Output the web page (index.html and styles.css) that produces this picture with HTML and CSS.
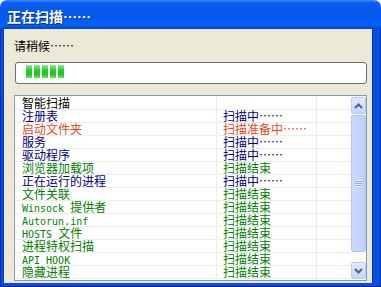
FILE: index.html
```html
<!DOCTYPE html>
<html lang="zh-CN">
<head>
    <meta charset="UTF-8">
    <meta name="viewport" content="width=device-width, initial-scale=1.0">
    <title>正在扫描……</title>
    <link rel="stylesheet" href="styles.css">
</head>
<body>
    <div class="window">
        <div class="titlebar">
            <span class="title">正在扫描……</span>
        </div>
        <div class="frame">
            <div class="content">
                <p class="wait">请稍候……</p>
                <div class="progress">
                    <span class="block"></span>
                    <span class="block"></span>
                    <span class="block"></span>
                    <span class="block"></span>
                    <span class="block"></span>
                </div>
                <div class="list">
                    <div class="rows">
                        <div class="row black"><span class="name">智能扫描</span><span class="state"></span><span class="extra"></span></div>
                        <div class="row navy"><span class="name">注册表</span><span class="state">扫描中……</span><span class="extra"></span></div>
                        <div class="row orange"><span class="name">启动文件夹</span><span class="state">扫描准备中……</span><span class="extra"></span></div>
                        <div class="row navy"><span class="name">服务</span><span class="state">扫描中……</span><span class="extra"></span></div>
                        <div class="row navy"><span class="name">驱动程序</span><span class="state">扫描中……</span><span class="extra"></span></div>
                        <div class="row green"><span class="name">浏览器加载项</span><span class="state">扫描结束</span><span class="extra"></span></div>
                        <div class="row navy"><span class="name">正在运行的进程</span><span class="state">扫描中……</span><span class="extra"></span></div>
                        <div class="row green"><span class="name">文件关联</span><span class="state">扫描结束</span><span class="extra"></span></div>
                        <div class="row green"><span class="name"><span class="latin">Winsock </span>提供者</span><span class="state">扫描结束</span><span class="extra"></span></div>
                        <div class="row green"><span class="name"><span class="latin">Autorun.inf</span></span><span class="state">扫描结束</span><span class="extra"></span></div>
                        <div class="row green"><span class="name"><span class="latin">HOSTS </span>文件</span><span class="state">扫描结束</span><span class="extra"></span></div>
                        <div class="row green"><span class="name">进程特权扫描</span><span class="state">扫描结束</span><span class="extra"></span></div>
                        <div class="row green"><span class="name"><span class="latin">API HOOK</span></span><span class="state">扫描结束</span><span class="extra"></span></div>
                        <div class="row green"><span class="name">隐藏进程</span><span class="state">扫描结束</span><span class="extra"></span></div>
                    </div>
                    <div class="scrollbar">
                        <div class="sb-btn">
                            <svg width="9" height="6" viewBox="0 0 9 6"><path d="M1 5 L4.5 1.5 L8 5" fill="none" stroke="#4d6185" stroke-width="2"/></svg>
                        </div>
                        <div class="sb-thumb">
                            <span class="grip"></span>
                        </div>
                        <div class="sb-track"></div>
                        <div class="sb-btn">
                            <svg width="9" height="6" viewBox="0 0 9 6"><path d="M1 1 L4.5 4.5 L8 1" fill="none" stroke="#4d6185" stroke-width="2"/></svg>
                        </div>
                    </div>
                </div>
            </div>
        </div>
    </div>
</body>
</html>
```

FILE: styles.css
```css
body {
    margin: 0;
    padding: 0;
    background-color: #fff;
    font-family: "Noto Sans CJK SC", "Liberation Sans", sans-serif;
    font-size: 12px;
    color: #000;
}

.window {
    width: 381px;
    height: 287px;
    display: flex;
    flex-direction: column;
}

.titlebar {
    height: 29px;
    flex: none;
    display: flex;
    align-items: center;
    padding: 2px 0 0 7px;
    box-sizing: border-box;
    border-radius: 7px 7px 0 0;
    background: linear-gradient(#3d8cf7, #0a5ef0 10%, #0356e8 45%, #0561f4 85%, #0451e0 95%, #0341cc);
}

.title {
    color: #fff;
    font-size: 14px;
    font-weight: bold;
    line-height: 16px;
    text-shadow: 1px 1px 0 #0a2a8a;
}

.frame {
    flex: 1;
    display: flex;
    padding: 0 9px 4px 4px;
    background: #0a4ee0;
    box-shadow: inset 1px 0 #0a2fb0, inset -1px 0 #0a2fb0, inset 0 -1px #06239a;
}

.content {
    flex: 1;
    background-color: #ece9d8;
    padding: 10px 5px 0 10px;
    box-shadow: -1px 0 #0a3ccc, 1px 0 #0a2fb0;
}

.wait {
    margin: 0;
    line-height: 14px;
}

.progress {
    margin: 9px 0 0 1px;
    height: 18px;
    border: 1px solid #6e6e6e;
    border-radius: 3px;
    background: #fff;
    display: flex;
    gap: 2px;
    padding: 2px 10px 0;
}

.block {
    width: 6px;
    height: 13px;
    background: linear-gradient(#9ae89a, #3ed53e 30%, #1fc51f 55%, #2ccc2c 80%, #7ee07e);
}

.list {
    margin-top: 11px;
    height: 184px;
    border: 1px solid #7f9db9;
    background: #fff;
    display: flex;
}

.rows {
    flex: 1;
    padding-top: 1px;
    background: linear-gradient(to right, transparent 201px, #eeede5 201px, #eeede5 202px, transparent 202px, transparent 301px, #eeede5 301px, #eeede5 302px, transparent 302px);
}

.row {
    display: flex;
    height: 12px;
    line-height: 12px;
    border-bottom: 1px solid #eeede5;
    white-space: nowrap;
}

.name {
    width: 195px;
    padding-left: 7px;
}

.state {
    width: 95px;
    padding-left: 5px;
    margin-left: 1px;
}

.extra {
    flex: 1;
    margin-left: 1px;
}

.latin {
    font-family: "DejaVu Sans Mono", monospace;
    font-size: 10px;
    white-space: pre;
}

.black { color: #000; }
.navy { color: #000080; }
.orange { color: #e8481a; }
.green { color: #008000; }

.scrollbar {
    width: 15px;
    display: flex;
    flex-direction: column;
    background: #fbfbf8;
}

.sb-btn {
    height: 15px;
    margin: 1px 0;
    border: 1px solid #b7caf5;
    border-radius: 2px;
    background: linear-gradient(#e1eafe, #c4d6fd);
    display: flex;
    align-items: center;
    justify-content: center;
}

.sb-thumb {
    height: 135px;
    border: 1px solid #b1c6f4;
    border-radius: 2px;
    background: linear-gradient(to right, #cbdafd, #bdd0fb);
    display: flex;
    align-items: center;
    justify-content: center;
}

.grip {
    width: 7px;
    height: 7px;
    background: repeating-linear-gradient(#eef3ff 0, #eef3ff 1px, #8cabea 1px, #8cabea 2px);
}

.sb-track {
    flex: 1;
}
```
